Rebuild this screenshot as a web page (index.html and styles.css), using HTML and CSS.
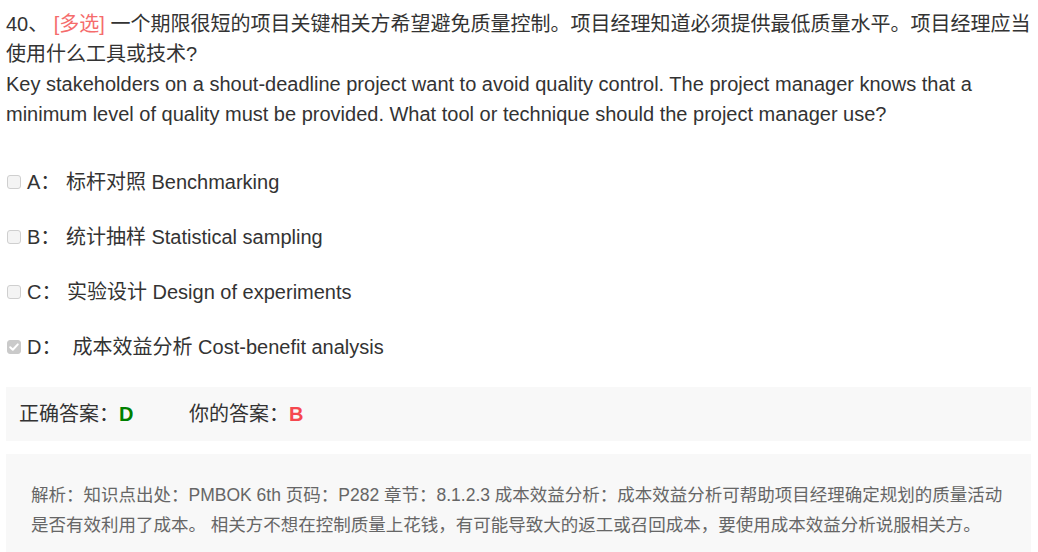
FILE: index.html
```html
<!DOCTYPE html>
<html lang="zh">
<head>
<meta charset="utf-8">
<link rel="stylesheet" href="styles.css">
</head>
<body>
<div class="page">
  <div class="question">
    <p class="title">40、 <span class="tag">[多选]</span> 一个期限很短的项目关键相关方希望避免质量控制。项目经理知道必须提供最低质量水平。项目经理应当使用什么工具或技术?</p>
    <p class="title">Key stakeholders on a shout-deadline project want to avoid quality control. The project manager knows that a minimum level of quality must be provided. What tool or technique should the project manager use?</p>
  </div>
  <ul class="options">
    <li class="option"><span class="box"></span>A： 标杆对照 Benchmarking</li>
    <li class="option"><span class="box"></span>B： 统计抽样 Statistical sampling</li>
    <li class="option"><span class="box"></span>C： 实验设计 Design of experiments</li>
    <li class="option"><span class="box checked"><svg viewBox="0 0 14 14" width="14" height="14"><path d="M3.2 7.2 L5.8 9.8 L10.8 4.4" fill="none" stroke="#fff" stroke-width="2" stroke-linecap="round" stroke-linejoin="round"/></svg></span>D：&nbsp; 成本效益分析 Cost-benefit analysis</li>
  </ul>
  <div class="answer">
    <span class="label">正确答案：</span><span class="right">D</span>
    <span class="label mine">你的答案：</span><span class="wrong">B</span>
  </div>
  <div class="analysis">
    解析：知识点出处：PMBOK 6th 页码：P282 章节：8.1.2.3 成本效益分析：成本效益分析可帮助项目经理确定规划的质量活动是否有效利用了成本。 相关方不想在控制质量上花钱，有可能导致大的返工或召回成本，要使用成本效益分析说服相关方。
  </div>
</div>
</body>
</html>
```

FILE: styles.css
```css
* { box-sizing: border-box; }
html, body { margin: 0; padding: 0; background: #fff; }
body {
  font-family: "Liberation Sans", "Noto Sans CJK SC", sans-serif;
  color: #333;
}
.page {
  width: 1038px;
  padding: 9px 7px 0 6px;
}
.title {
  margin: 0;
  font-size: 20px;
  line-height: 30px;
}
.tag { color: #f56c6c; }
.options {
  list-style: none;
  margin: 38px 0 0;
  padding: 0;
}
.option {
  display: flex;
  align-items: center;
  font-size: 20px;
  line-height: 30px;
  height: 30px;
  margin-bottom: 25px;
  white-space: pre;
}
.box {
  width: 14px;
  height: 14px;
  margin: -1px 6px 0 1px;
  border: 1px solid #cfcfcf;
  border-radius: 3px;
  background: #f4f4f4;
  flex: none;
  display: flex;
}
.box.checked {
  border-color: #cacaca;
  background: #cacaca;
}
.box.checked svg { margin: -1px; }
.answer {
  background: #f8f8f8;
  height: 54px;
  padding: 12px 13px;
  font-size: 20px;
  line-height: 30px;
}
.right { color: #008000; font-weight: bold; }
.wrong { color: #f5474f; font-weight: bold; }
.mine { margin-left: 50px; }
.analysis {
  margin-top: 13px;
  background: #f8f8f8;
  padding: 26px 25px 25px 25px;
  font-size: 17.5px;
  line-height: 30px;
  color: #666;
}
```
